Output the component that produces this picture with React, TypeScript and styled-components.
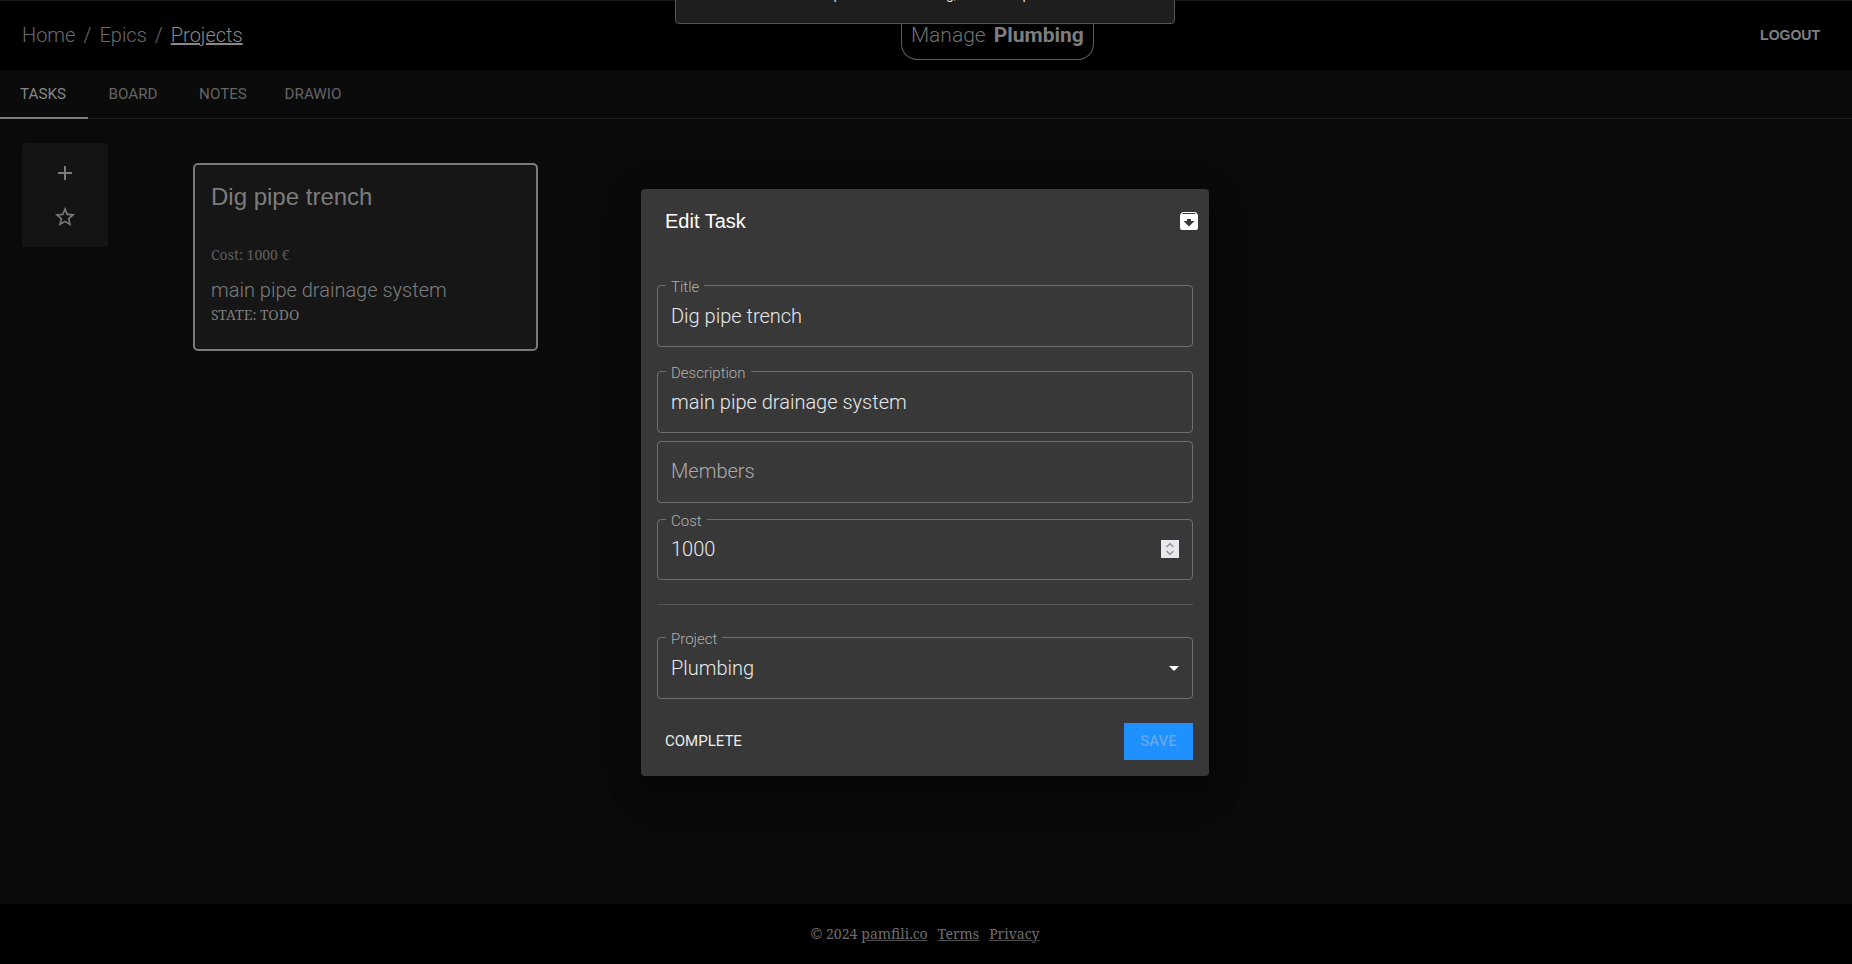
import React from 'react'
import styled, { createGlobalStyle } from 'styled-components'
import { MdAdd, MdArchive, MdStarBorder } from 'react-icons/md'

const Global = createGlobalStyle`
  html, body {
    margin: 0;
    padding: 0;
    height: 100%;
    background: #0a0a0a;
  }
  #root {
    height: 100%;
  }
  * {
    box-sizing: border-box;
  }
`

const Page = styled.div`
  position: relative;
  display: flex;
  flex-direction: column;
  width: 1852px;
  height: 964px;
  overflow: hidden;
  background: #0a0a0a;
`

const Header = styled.header`
  display: flex;
  justify-content: space-between;
  align-items: center;
  height: 70px;
  padding: 0 32px 2px 22px;
  background: #000;
  border-top: 1px solid #1a1a1a;
`

const Breadcrumbs = styled.nav`
  display: flex;
  align-items: center;
  gap: 8px;
  font: 300 20px 'Roboto', sans-serif;
  color: #6a6a6a;
`

const Crumb = styled.a<{ $current?: boolean }>`
  color: ${(p) => (p.$current ? '#8a8a8a' : '#6a6a6a')};
  text-decoration: ${(p) => (p.$current ? 'underline' : 'none')};
`

const ProjectBadge = styled.div`
  display: flex;
  align-items: center;
  gap: 8px;
  align-self: flex-start;
  height: 59px;
  margin-right: 8px;
  padding: 9px 9px 0;
  border: 1px solid #5c5c5c;
  border-top: 0;
  border-radius: 0 0 16px 16px;
  font: 300 21px 'Roboto', sans-serif;
  color: #707070;

  b {
    font-weight: 700;
    color: #7e7e7e;
  }
`

const Logout = styled.a`
  font: 700 14px 'Liberation Sans', sans-serif;
  color: #808080;
`

const Tabs = styled.div`
  display: flex;
  height: 49px;
  background: #0b0b0b;
  border-bottom: 1px solid #1e1e1e;
`

const Tab = styled.div<{ $active?: boolean }>`
  display: flex;
  justify-content: center;
  align-items: center;
  width: ${(p) => (p.$active ? 88 : 90)}px;
  height: 49px;
  padding-right: ${(p) => (p.$active ? 2 : 0)}px;
  font: 400 15.2px 'Roboto', sans-serif;
  color: ${(p) => (p.$active ? '#858585' : '#646464')};
  border-bottom: 2px solid ${(p) => (p.$active ? '#7d7d7d' : 'transparent')};
`

const Content = styled.main`
  flex: 1;
  display: flex;
  align-items: flex-start;
  gap: 85px;
  padding: 24px 22px;
`

const Actions = styled.div`
  display: flex;
  flex-direction: column;
  align-items: center;
  gap: 20px;
  width: 86px;
  height: 104px;
  padding-top: 18px;
  background: #141414;
  border-radius: 4px;
  color: #7c7c7c;
`

const TaskCard = styled.article`
  width: 345px;
  height: 188px;
  margin-top: 20px;
  padding: 17px 16px 0;
  background: #161616;
  border: 2px solid #7a7a7a;
  border-radius: 5px;
`

const CardTitle = styled.h3`
  margin: 0;
  font: 400 24px/30px 'Liberation Sans', sans-serif;
  color: #7c7c7c;
`

const CardCost = styled.div`
  margin-top: 34px;
  font: 400 14px/18px 'Noto Serif', 'DejaVu Serif', serif;
  color: #5e5e5e;
`

const CardDescription = styled.div`
  margin-top: 11px;
  font: 300 20px/30px 'Roboto', sans-serif;
  color: #7c7c7c;
`

const CardState = styled.div`
  font: 400 14px/20px 'Noto Serif', 'DejaVu Serif', serif;
  color: #7c7c7c;
`

const Footer = styled.footer`
  display: flex;
  justify-content: center;
  align-items: center;
  gap: 10px;
  height: 60px;
  padding: 0 2px 2px 0;
  background: #000;
  font: 400 14px 'Noto Serif', 'DejaVu Serif', serif;
  color: #6e6e6e;
`

const FooterLink = styled.a`
  color: #6e6e6e;
  text-decoration: underline;
  text-decoration-color: #4f4f4f;
`

const Copyright = styled.span`
  display: flex;
  gap: 4px;
`

const Snackbar = styled.div`
  position: absolute;
  top: -20px;
  left: 675px;
  width: 500px;
  height: 44px;
  padding: 3px 4px 0 0;
  background: #1e1e1e;
  border: 1px solid #555;
  border-radius: 4px;
  text-align: center;
  font: 400 14px/20px 'Roboto', sans-serif;
  color: #ddd;
`

const Dialog = styled.section`
  position: absolute;
  top: 189px;
  left: 641px;
  display: flex;
  flex-direction: column;
  width: 568px;
  height: 587px;
  background: #383838;
  border-radius: 4px;
  box-shadow: 0 11px 15px -7px rgba(0, 0, 0, 0.1), 0 24px 38px 3px rgba(0, 0, 0, 0.07), 0 9px 46px 8px rgba(0, 0, 0, 0.06);
`

const DialogHeader = styled.div`
  display: flex;
  justify-content: space-between;
  align-items: center;
  height: 64px;
  padding: 0 8px 0 24px;
  color: #fff;
`

const DialogTitle = styled.h2`
  margin: 0;
  font: 400 20px 'Liberation Sans', sans-serif;
  color: #fff;
`

const DialogBody = styled.form`
  flex: 1;
  display: flex;
  flex-direction: column;
  padding: 32px 16px 0;
`

const Field = styled.div<{ $gap?: number; $short?: boolean }>`
  position: relative;
  display: flex;
  justify-content: space-between;
  align-items: center;
  flex: none;
  margin-top: ${(p) => p.$gap ?? 0}px;
  height: ${(p) => (p.$short ? 61 : 62)}px;
  padding: 0 13px ${(p) => (p.$short ? 2 : 0)}px;
  border: 1px solid #6f6f6f;
  border-radius: 4px;
  font: 300 20px 'Roboto', sans-serif;
  color: #e8e8e8;
`

const FieldLabel = styled.label`
  position: absolute;
  top: -7px;
  left: 8px;
  padding: 0 5px;
  background: #383838;
  font: 300 15px/16px 'Roboto', sans-serif;
  color: #b0b0b0;
`

const Placeholder = styled.span`
  margin-top: -2px;
  color: #ababab;
`

const Spinner = styled.span`
  display: flex;
  width: 18px;
  height: 18px;
  background: #e9e9ed;
`

const Divider = styled.hr`
  flex: none;
  margin: 24px 0 32px;
  border: 0;
  border-top: 1px solid #555;
`

const DialogActions = styled.div`
  display: flex;
  justify-content: space-between;
  align-items: center;
  margin-top: 24px;
  padding-left: 8px;
`

const TextButton = styled.button`
  padding: 0 0 1px;
  background: none;
  border: 0;
  font: 400 15px 'Roboto', sans-serif;
  color: #ececec;
`

const SaveButton = styled.button`
  width: 69px;
  height: 37px;
  padding: 0 0 1px;
  background: #1e90ff;
  border: 0;
  font: 500 15px 'Roboto', sans-serif;
  color: #62a8ea;
`

const SpinIcon = () => (
  <svg width="18" height="18" viewBox="0 0 18 18" fill="none" stroke="#8f8f96" strokeWidth="1.500">
    <path d="M5.500 7 9 3.800 12.500 7M5.500 11 9 14.200 12.500 11" />
  </svg>
)

const Caret = () => (
  <svg width="10" height="5" viewBox="0 0 10 5" fill="#fff">
    <path d="M0 0h10L5 5z" />
  </svg>
)

export default function App() {
  return (
    <Page>
      <Global />
      <Header>
        <Breadcrumbs>
          <Crumb>Home</Crumb>
          <span>/</span>
          <Crumb>Epics</Crumb>
          <span>/</span>
          <Crumb $current>Projects</Crumb>
        </Breadcrumbs>
        <ProjectBadge>
          Manage <b>Plumbing</b>
        </ProjectBadge>
        <Logout>LOGOUT</Logout>
      </Header>
      <Tabs>
        <Tab $active>TASKS</Tab>
        <Tab>BOARD</Tab>
        <Tab>NOTES</Tab>
        <Tab>DRAWIO</Tab>
      </Tabs>
      <Content>
        <Actions>
          <MdAdd size={24} />
          <MdStarBorder size={24} />
        </Actions>
        <TaskCard>
          <CardTitle>Dig pipe trench</CardTitle>
          <CardCost>Cost: 1000 €</CardCost>
          <CardDescription>main pipe drainage system</CardDescription>
          <CardState>STATE: TODO</CardState>
        </TaskCard>
      </Content>
      <Footer>
        <Copyright>
          © 2024 <FooterLink>pamfili.co</FooterLink>
        </Copyright>
        <FooterLink>Terms</FooterLink>
        <FooterLink>Privacy</FooterLink>
      </Footer>

      <Snackbar>Task updated in Plumbing, state complete</Snackbar>

      <Dialog>
        <DialogHeader>
          <DialogTitle>Edit Task</DialogTitle>
          <MdArchive size={24} />
        </DialogHeader>
        <DialogBody>
          <Field>
            <FieldLabel>Title</FieldLabel>
            Dig pipe trench
          </Field>
          <Field $gap={24}>
            <FieldLabel>Description</FieldLabel>
            main pipe drainage system
          </Field>
          <Field $gap={8}>
            <Placeholder>Members</Placeholder>
          </Field>
          <Field $gap={16} $short>
            <FieldLabel>Cost</FieldLabel>
            1000
            <Spinner>
              <SpinIcon />
            </Spinner>
          </Field>
          <Divider />
          <Field>
            <FieldLabel>Project</FieldLabel>
            Plumbing
            <Caret />
          </Field>
          <DialogActions>
            <TextButton type="button">COMPLETE</TextButton>
            <SaveButton type="button">SAVE</SaveButton>
          </DialogActions>
        </DialogBody>
      </Dialog>
    </Page>
  )
}
